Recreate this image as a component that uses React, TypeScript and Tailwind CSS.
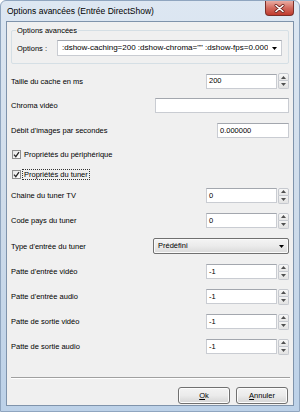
import React from "react";

function Arrow({ up }: { up?: boolean }) {
  return (
    <svg width="5" height="3" viewBox="0 0 5 3">
      <path d={up ? "M0 3L2.5 0L5 3Z" : "M0 0L5 0L2.5 3Z"} fill="#505050" />
    </svg>
  );
}

function Spin() {
  return (
    <div className="flex flex-col w-[11px] h-[16px] ml-[1px]">
      <div className="h-[8px] border border-[#c6c9cf] rounded-t-[2px] bg-linear-to-b from-[#f8f8f8] to-[#e6e6e6] flex items-center justify-center">
        <Arrow up />
      </div>
      <div className="h-[8px] border border-t-0 border-[#c6c9cf] rounded-b-[2px] bg-linear-to-b from-[#f4f4f4] to-[#e2e2e2] flex items-center justify-center">
        <Arrow />
      </div>
    </div>
  );
}

function TextBox({ w, value }: { w: string; value?: string }) {
  return (
    <div
      className={`${w} h-[15px] bg-white border border-[#c9ccd2] border-t-[#a3a7ae] flex items-center pl-[2px] text-[7.5px] text-black whitespace-nowrap overflow-hidden`}
    >
      {value}
    </div>
  );
}

function SpinBox({ value }: { value: string }) {
  return (
    <div className="flex items-center">
      <TextBox w="w-[71px]" value={value} />
      <Spin />
    </div>
  );
}

function Row({
  h,
  label,
  children,
}: {
  h: string;
  label: string;
  children: React.ReactNode;
}) {
  return (
    <div className={`${h} flex items-center justify-between pl-[4px] pr-[4px]`}>
      <span className="text-[7.5px] leading-[9px] text-black">{label}</span>
      {children}
    </div>
  );
}

function Check({ h, label, focus }: { h: string; label: string; focus?: boolean }) {
  return (
    <div className={`${h} flex items-center pl-[5px]`}>
      <div className="w-[9px] h-[9px] border border-[#8e8f8f] bg-linear-to-br from-[#e6e6e6] to-[#ffffff] flex items-center justify-center">
        <svg width="7" height="7" viewBox="0 0 7 7">
          <path d="M1 3.6L2.8 5.6L6 1.2" stroke="#2a2a2a" strokeWidth="1.3" fill="none" />
        </svg>
      </div>
      <span
        className={`ml-[1px] px-[1px] text-[7.5px] leading-[9px] text-black ${
          focus ? "border border-dotted border-[#333]" : "border border-transparent"
        }`}
      >
        {label}
      </span>
    </div>
  );
}

function Button({ children }: { children: React.ReactNode }) {
  return (
    <div className="w-[52px] h-[17px] rounded-[3px] border border-[#707070] bg-linear-to-b from-[#f3f3f3] via-[#ebebeb] to-[#d4d4d4] flex items-center justify-center text-[7.5px] text-black shadow-[inset_0_0_0_1px_#fcfcfc]">
      {children}
    </div>
  );
}

export default function App() {
  return (
    <div className="w-[300px] h-[412px] relative overflow-hidden font-['Liberation_Sans',Arial,sans-serif] bg-linear-to-b from-[#dde7f2] via-[#cfdcea] to-[#bcd1e8] border border-[#8fa5bf] rounded-t-[6px]">
      {/* title bar */}
      <div className="h-[20px] flex items-center pl-[6px]">
        <span className="text-[8.5px] text-black leading-[10px]">
          Options avancées (Entrée DirectShow)
        </span>
      </div>
      {/* close button */}
      <div className="absolute left-[264px] top-0 w-[29px] h-[15px] rounded-b-[4px] border border-t-0 border-[#7b2f28] bg-linear-to-b from-[#e9aca3] via-[#d26a5e] to-[#c0392d] flex items-center justify-center">
        <svg width="11" height="9" viewBox="0 0 11 9">
          <path d="M2 1.5L9 7.5M9 1.5L2 7.5" stroke="#6b2520" strokeWidth="3" strokeLinecap="round" />
          <path d="M2 1.5L9 7.5M9 1.5L2 7.5" stroke="#ffffff" strokeWidth="1.6" strokeLinecap="round" />
        </svg>
      </div>

      {/* client area */}
      <div className="ml-[5px] w-[288px] h-[385px] border border-[#7f93ab] bg-[#f0f0f0] flex flex-col">
        {/* group box */}
        <div className="relative ml-[4px] mt-[8px] w-[278px] h-[34px] border border-[#d5dfe5] rounded-[2px] flex items-center pl-[5px] pt-[2px]">
          <span className="absolute left-[4px] -top-[5px] px-[1px] bg-[#f0f0f0] text-[7.5px] leading-[9px] text-black">
            Options avancées
          </span>
          <span className="w-[40px] text-[7.5px] leading-[9px] text-black">Options :</span>
          <div className="w-[225px] h-[16px] bg-white border border-[#c9ccd2] border-t-[#a3a7ae] flex items-center">
            <div className="flex-1 overflow-hidden whitespace-nowrap pl-[4px] text-[8px] text-black">
              :dshow-caching=200 :dshow-chroma="" :dshow-fps=0.000000
            </div>
            <div className="w-[13px] h-full flex items-center justify-center">
              <svg width="5" height="3" viewBox="0 0 5 3">
                <path d="M0 0L5 0L2.5 3Z" fill="#000" />
              </svg>
            </div>
          </div>
        </div>

        <div className="mt-[5px] flex flex-col">
          <Row h="h-[24px]" label="Taille du cache en ms">
            <SpinBox value="200" />
          </Row>
          <Row h="h-[25px]" label="Chroma vidéo">
            <TextBox w="w-[134px]" />
          </Row>
          <Row h="h-[25px]" label="Débit d'images par secondes">
            <TextBox w="w-[72px]" value="0.000000" />
          </Row>
          <Check h="h-[22px]" label="Propriétés du périphérique" />
          <Check h="h-[18px]" label="Propriétés du tuner" focus />
          <Row h="h-[25px]" label="Chaine du tuner TV">
            <SpinBox value="0" />
          </Row>
          <Row h="h-[25px]" label="Code pays du tuner">
            <SpinBox value="0" />
          </Row>
          <Row h="h-[26px]" label="Type d'entrée du tuner">
            <div className="w-[136px] h-[16px] rounded-[2px] border border-[#707070] bg-linear-to-b from-[#f4f4f4] via-[#ebebeb] to-[#d9d9d9] flex items-center justify-between pl-[4px] pr-[4px] shadow-[inset_0_0_0_1px_#fafafa]">
              <span className="text-[7.5px] text-black">Prédéfini</span>
              <svg width="5" height="3" viewBox="0 0 5 3">
                <path d="M0 0L5 0L2.5 3Z" fill="#000" />
              </svg>
            </div>
          </Row>
          <Row h="h-[25px]" label="Patte d'entrée vidéo">
            <SpinBox value="-1" />
          </Row>
          <Row h="h-[25px]" label="Patte d'entrée audio">
            <SpinBox value="-1" />
          </Row>
          <Row h="h-[25px]" label="Patte de sortie vidéo">
            <SpinBox value="-1" />
          </Row>
          <Row h="h-[25px]" label="Patte de sortie audio">
            <SpinBox value="-1" />
          </Row>
        </div>

        {/* separator */}
        <div className="mt-[18px] ml-[4px] mr-[3px] h-[2px] border-t border-[#a0a0a0] border-b border-b-white" />

        {/* buttons */}
        <div className="mt-[8px] flex justify-end gap-[6px] pr-[5px]">
          <Button>
            <span>
              <span className="underline">O</span>k
            </span>
          </Button>
          <Button>
            <span>
              <span className="underline">A</span>nnuler
            </span>
          </Button>
        </div>
      </div>
    </div>
  );
}
